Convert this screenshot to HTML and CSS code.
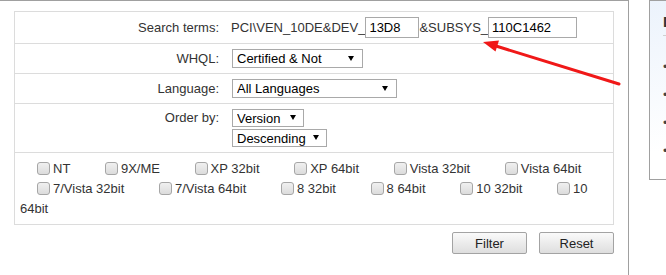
FILE: index.html
```html
<!DOCTYPE html>
<html lang="en">
<head>
    <meta charset="UTF-8">
    <meta name="viewport" content="width=device-width, initial-scale=1.0">
    <title>Driver Search</title>
    <link rel="stylesheet" href="styles.css">
</head>
<body>
    <div class="page">
        <div class="search-box">
            <form class="filter-form">
                <div class="filter-table">
                    <div class="filter-row">
                        <label class="filter-label">Search terms:</label>
                        <div class="filter-value hw-ids">PCI\VEN_10DE&amp;DEV_<input class="hw-id dev-id" type="text" value="13D8">&amp;SUBSYS_<input class="hw-id subsys-id" type="text" value="110C1462"></div>
                    </div>

                    <div class="filter-row">
                        <label class="filter-label">WHQL:</label>
                        <div class="filter-value">
                            <span class="select-wrap select-whql">
                                <select>
                                    <option>Certified &amp; Not</option>
                                    <option>Certified only</option>
                                </select>
                            </span>
                        </div>
                    </div>

                    <div class="filter-row">
                        <label class="filter-label">Language:</label>
                        <div class="filter-value">
                            <span class="select-wrap select-lang">
                                <select>
                                    <option>All Languages</option>
                                    <option>English</option>
                                </select>
                            </span>
                        </div>
                    </div>

                    <div class="filter-row">
                        <label class="filter-label">Order by:</label>
                        <div class="filter-value order-by">
                            <span class="select-wrap select-small select-order">
                                <select>
                                    <option>Version</option>
                                    <option>Date</option>
                                </select>
                            </span>
                            <span class="select-wrap select-small select-dir">
                                <select>
                                    <option>Descending</option>
                                    <option>Ascending</option>
                                </select>
                            </span>
                        </div>
                    </div>

                    <div class="filter-row os-row">
                        <span class="os-item"><input type="checkbox">NT</span>
                        <span class="os-item"><input type="checkbox">9X/ME</span>
                        <span class="os-item"><input type="checkbox">XP 32bit</span>
                        <span class="os-item"><input type="checkbox">XP 64bit</span>
                        <span class="os-item"><input type="checkbox">Vista 32bit</span>
                        <span class="os-item"><input type="checkbox">Vista 64bit</span>
                        <span class="os-item"><input type="checkbox">7/Vista 32bit</span>
                        <span class="os-item"><input type="checkbox">7/Vista 64bit</span>
                        <span class="os-item"><input type="checkbox">8 32bit</span>
                        <span class="os-item"><input type="checkbox">8 64bit</span>
                        <span class="os-item"><input type="checkbox">10 32bit</span>
                        <span class="os-item"><input type="checkbox">10 64bit</span>
                    </div>
                </div>

                <div class="filter-buttons">
                    <button type="button" class="btn">Filter</button>
                    <button type="reset" class="btn">Reset</button>
                </div>
            </form>
        </div>

        <div class="side-panel">
            <h4 class="side-title">Downloads</h4>
            <ul class="side-list">
                <li><span class="bullet">•</span>Latest drivers</li>
                <li><span class="bullet">•</span>Beta drivers</li>
                <li><span class="bullet">•</span>Legacy drivers</li>
                <li><span class="bullet">•</span>Tools</li>
            </ul>
        </div>
    </div>

    <!-- annotation arrow drawn over the form -->
    <svg class="arrow" width="666" height="275" viewBox="0 0 666 275">
        <line x1="619" y1="84" x2="496" y2="46" stroke="#f01818" stroke-width="3" stroke-linecap="round"/>
        <polygon points="483,42 499,40.5 495.5,51.5" fill="#f01818"/>
    </svg>
</body>
</html>
```

FILE: styles.css
```css
:root {
    --text-color: #333;
    --line-color: #dcdcdc;
    --frame-color: #a0a0a0;
    --control-border: #a9a9a9;
}

body {
    margin: 0;
    position: relative;
    overflow: hidden;
    height: 275px;
    font-family: "Liberation Sans", Arial, sans-serif;
    font-size: 13px;
    color: var(--text-color);
    background: white;
}

.page {
    display: flex;
    align-items: flex-start;
    gap: 20px;
}

.search-box {
    flex-shrink: 0;
    width: 600px;
    min-height: 300px;
    margin-left: -1px;
    padding: 10px 14px;
    border: 1px solid var(--frame-color);
}

.filter-table {
    border: 1px solid var(--line-color);
}

.filter-row {
    display: grid;
    grid-template-columns: 211px 1fr;
    border-top: 1px solid var(--line-color);
}

.filter-row:first-child {
    border-top: none;
}

.filter-label {
    padding: 5px 7px 5px 0;
    text-align: right;
    line-height: 19px;
}

.filter-row:first-child .filter-label {
    line-height: 21px;
}

.filter-row:nth-child(4) .filter-label {
    line-height: 18px;
}

.filter-value {
    padding: 5px 0 5px 6px;
}

.hw-ids {
    display: flex;
    align-items: center;
    height: 21px;
    padding-left: 5px;
    white-space: pre;
}

.hw-id {
    box-sizing: border-box;
    height: 21px;
    margin: 0;
    padding: 0 3px;
    border: 1px solid var(--control-border);
    font-family: inherit;
    font-size: 13px;
    color: #000;
}

.dev-id {
    width: 54px;
}

.subsys-id {
    width: 89px;
}

.select-wrap {
    position: relative;
    display: inline-block;
    height: 19px;
}

.select-wrap select {
    box-sizing: border-box;
    width: 100%;
    height: 100%;
    margin: 0;
    padding: 0 0 0 4px;
    border: 1px solid var(--control-border);
    border-radius: 0;
    background: white;
    font-family: inherit;
    font-size: 13px;
    color: #000;
    -webkit-appearance: none;
    appearance: none;
}

.select-wrap::after {
    content: "";
    position: absolute;
    right: 9px;
    top: 7px;
    border-left: 3px solid transparent;
    border-right: 3px solid transparent;
    border-top: 5px solid #000;
    pointer-events: none;
}

.select-small {
    height: 18px;
}

.select-small::after {
    right: 8px;
    top: 6px;
}

.select-whql {
    width: 131px;
}

.select-lang {
    width: 165px;
}

.select-order {
    width: 72px;
}

.select-dir {
    width: 95px;
}

.order-by {
    display: flex;
    flex-direction: column;
    align-items: flex-start;
    gap: 2px;
}

.os-row {
    display: block;
    padding: 6px 7px 5px 5px;
    line-height: 20px;
}

.os-item {
    margin-right: 14px;
}

.os-item input {
    box-sizing: border-box;
    width: 13px;
    height: 13px;
    margin: 0 3px 0 17px;
    vertical-align: -2px;
    border: 1px solid #a6a6a6;
    border-radius: 3px;
    background: linear-gradient(#f0f0f0, #dcdcdc);
    -webkit-appearance: none;
    appearance: none;
}

.filter-buttons {
    display: flex;
    justify-content: flex-end;
    gap: 12px;
    margin-top: 7px;
}

.btn {
    width: 75px;
    height: 22px;
    padding: 0;
    border: 1px solid #a3a3a3;
    border-radius: 2px;
    background: linear-gradient(#fafafa, #dedede);
    font-family: inherit;
    font-size: 13px;
    color: #222;
}

.side-panel {
    flex-shrink: 0;
    box-sizing: border-box;
    width: 200px;
    height: 180px;
    padding: 10px 0 0 13px;
    border: 1px solid var(--frame-color);
    background: linear-gradient(#ecf3fc, #ffffff 85%);
}

.side-title {
    margin: 0;
    padding-bottom: 2px;
    border-bottom: 1px solid #d0d0d0;
    font-size: 15px;
    line-height: 22px;
    color: #333;
}

.side-list {
    list-style: none;
    margin: 17px 0 0;
    padding: 0;
}

.side-list li {
    line-height: 28px;
    white-space: nowrap;
}

.bullet {
    display: inline-block;
    width: 14px;
    color: #444;
}

.arrow {
    position: absolute;
    top: 0;
    left: 0;
    pointer-events: none;
}
```
